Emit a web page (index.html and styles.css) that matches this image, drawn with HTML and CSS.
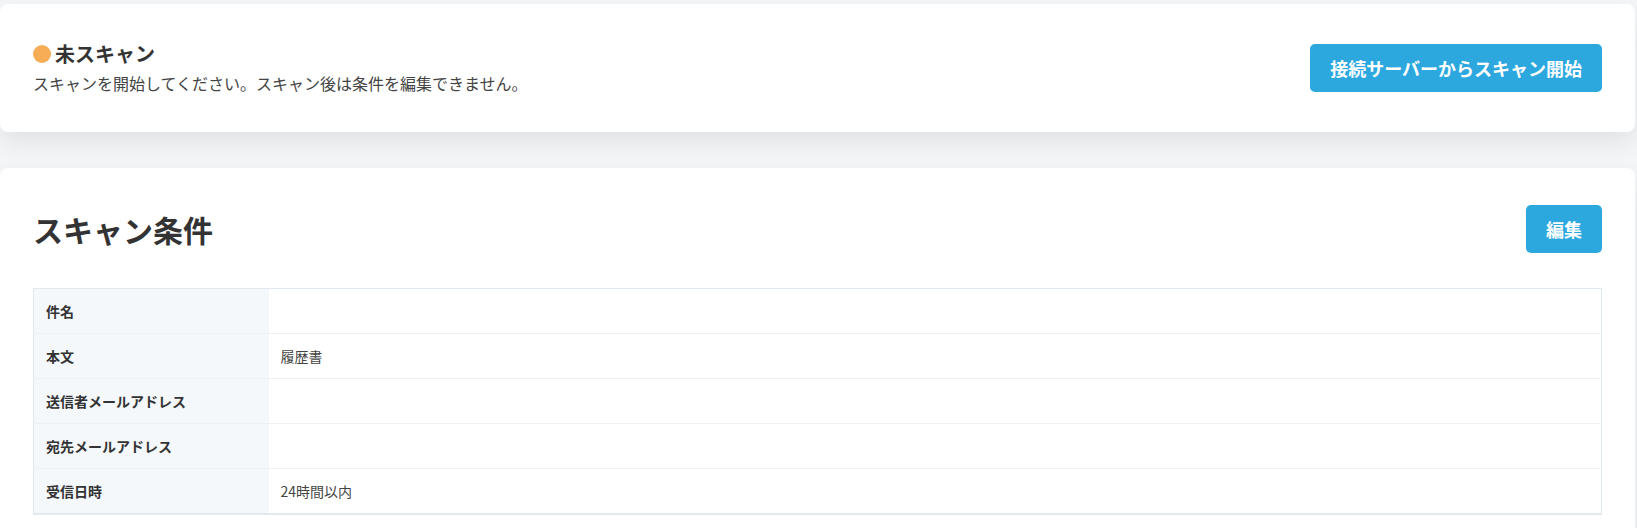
FILE: index.html
```html
<!DOCTYPE html>
<html lang="ja">
<head>
<meta charset="utf-8">
<title>スキャン</title>
<link rel="stylesheet" href="styles.css">
</head>
<body>
<div class="page">
  <section class="card status-card">
    <div class="status-info">
      <div class="status-title"><span class="dot"></span>未スキャン</div>
      <p class="status-desc">スキャンを開始してください。スキャン後は条件を編集できません。</p>
    </div>
    <button class="btn">接続サーバーからスキャン開始</button>
  </section>
  <section class="card cond-card">
    <div class="cond-head">
      <h2 class="cond-title">スキャン条件</h2>
      <button class="btn">編集</button>
    </div>
    <table class="cond-table">
      <tr><th>件名</th><td></td></tr>
      <tr><th>本文</th><td>履歴書</td></tr>
      <tr><th>送信者メールアドレス</th><td></td></tr>
      <tr><th>宛先メールアドレス</th><td></td></tr>
      <tr><th>受信日時</th><td>24時間以内</td></tr>
    </table>
  </section>
</div>
</body>
</html>
```
FILE: styles.css
```css
* { box-sizing: border-box; }
html, body { margin: 0; padding: 0; }
body {
  background: #f4f5f7;
  font-family: "Noto Sans CJK JP", "Noto Sans", sans-serif;
  color: #333;
}
.page {
  display: flex;
  flex-direction: column;
  gap: 36px;
  padding: 4px 2px 0 0;
}
.card {
  background: #fff;
  border-radius: 8px;
  box-shadow: 0 10px 24px rgba(0, 0, 0, 0.08);
}
.status-card {
  display: flex;
  justify-content: space-between;
  align-items: center;
  padding: 39px 33px 39px;
}
.status-title {
  display: flex;
  align-items: center;
  font-size: 20px;
  font-weight: 700;
  line-height: 22px;
  color: #333;
}
.dot {
  width: 18px;
  height: 18px;
  border-radius: 50%;
  background: #f6ad55;
  margin-right: 4px;
}
.status-desc {
  margin: 8px 0 0;
  font-size: 16px;
  line-height: 20px;
  color: #444;
}
.btn {
  font-family: inherit;
  background: #2da8df;
  color: #fff;
  border: none;
  border-radius: 5px;
  height: 48px;
  padding: 0 20px;
  font-size: 18px;
  font-weight: 700;
}
.cond-card {
  padding: 37px 33px 40px;
}
.cond-head {
  display: flex;
  justify-content: space-between;
  align-items: center;
}
.cond-title {
  margin: 0;
  font-size: 30px;
  font-weight: 700;
  line-height: 40px;
  color: #333;
}
.cond-table {
  margin-top: 35px;
  width: 100%;
  border-collapse: collapse;
  border: 1px solid #e2e8f0;
  border-bottom-width: 2px;
  font-size: 14px;
}
.cond-table tr { height: 45px; }
.cond-table tr + tr { border-top: 1px solid #edf1f6; }
.cond-table th {
  width: 235px;
  background: #f5f8fb;
  text-align: left;
  font-weight: 700;
  padding: 0 12px;
  color: #333;
}
.cond-table td {
  padding: 0 12px;
  color: #444;
}
```
